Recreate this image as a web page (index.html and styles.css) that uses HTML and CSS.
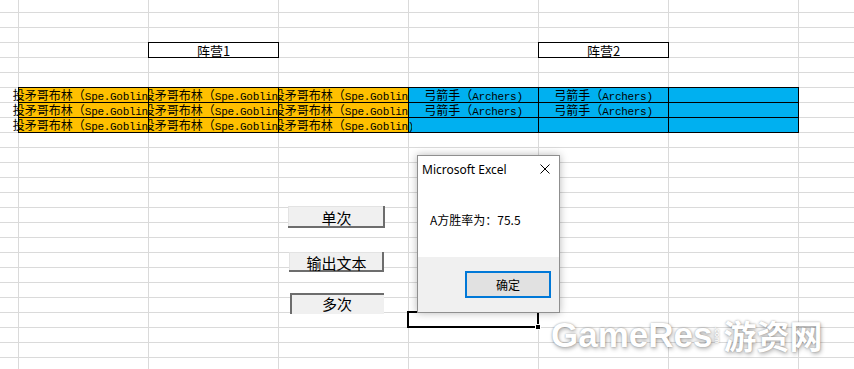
FILE: index.html
```html
<!DOCTYPE html>
<html lang="zh-CN">
<head>
<meta charset="utf-8">
<title>Excel</title>
<link rel="stylesheet" href="styles.css">
</head>
<body>
<div class="sheet">
  <div class="camp camp-1">阵营1</div>
  <div class="camp camp-2">阵营2</div>
  <div class="units">
    <div class="cell gob first"><span>投矛哥布林（<span class="en">Spe.Goblin)</span></span></div>
    <div class="cell gob"><span>投矛哥布林（<span class="en">Spe.Goblin)</span></span></div>
    <div class="cell gob"><span>投矛哥布林（<span class="en">Spe.Goblin)</span></span></div>
    <div class="cell arc"><span>弓箭手（<span class="en">Archers)</span></span></div>
    <div class="cell arc"><span>弓箭手（<span class="en">Archers)</span></span></div>
    <div class="cell arc"></div>

    <div class="cell gob first"><span>投矛哥布林（<span class="en">Spe.Goblin)</span></span></div>
    <div class="cell gob"><span>投矛哥布林（<span class="en">Spe.Goblin)</span></span></div>
    <div class="cell gob"><span>投矛哥布林（<span class="en">Spe.Goblin)</span></span></div>
    <div class="cell arc"><span>弓箭手（<span class="en">Archers)</span></span></div>
    <div class="cell arc"><span>弓箭手（<span class="en">Archers)</span></span></div>
    <div class="cell arc"></div>

    <div class="cell gob first"><span>投矛哥布林（<span class="en">Spe.Goblin)</span></span></div>
    <div class="cell gob"><span>投矛哥布林（<span class="en">Spe.Goblin)</span></span></div>
    <div class="cell gob last"><span>投矛哥布林（<span class="en">Spe.Goblin)</span></span></div>
    <div class="cell arc"></div>
    <div class="cell arc"></div>
    <div class="cell arc"></div>
  </div>
  <div class="active-cell"><span class="fill-handle"></span></div>
</div>

<button class="btn btn-raised btn-single">单次</button>
<button class="btn btn-raised btn-text">输出文本</button>
<button class="btn btn-sunken btn-multi">多次</button>

<div class="dialog">
  <div class="dlg-title">
    <span class="dlg-caption">Microsoft Excel</span>
    <svg class="dlg-close" width="10" height="10" viewBox="0 0 10 10"><path d="M0.5 0.5 L9.5 9.5 M9.5 0.5 L0.5 9.5" stroke="#000" stroke-width="1" fill="none"/></svg>
  </div>
  <div class="dlg-body">A方胜率为：75.5</div>
  <div class="dlg-footer"><button class="dlg-ok">确定</button></div>
</div>

<div class="watermark"><span class="wm-en">GameRes</span><span class="wm-com">.com</span><span class="wm-cn">游资网</span></div>
</body>
</html>
```

FILE: styles.css
```css
* { box-sizing: border-box; }
html, body { margin: 0; padding: 0; }
body {
  width: 854px;
  height: 369px;
  overflow: hidden;
  position: relative;
  background: #fff;
  font-family: "Noto Sans CJK SC", sans-serif;
  color: #000;
}
.sheet {
  margin-top: -3px;
  height: 390px;
  display: grid;
  grid-template-columns: 18px repeat(6, 130px) 1fr;
  grid-template-rows: repeat(26, 15px);
  background-image:
    linear-gradient(to right, #dadada 1px, transparent 1px),
    linear-gradient(to bottom, #dadada 1px, transparent 1px);
  background-size: 130px 15px;
  background-position: 18px 0;
}
.camp {
  grid-row: 4;
  margin: 0 -1px -1px 0;
  border: 1px solid #000;
  background: #fff;
  display: flex;
  justify-content: center;
  align-items: center;
  font-size: 13px;
  line-height: 14px;
  padding-top: 2px;
}
.camp-1 { grid-column: 3; }
.camp-2 { grid-column: 6; }

.units {
  grid-column: 2 / 8;
  grid-row: 7 / 10;
  margin: 0 -1px -1px 0;
  display: grid;
  grid-template-columns: repeat(6, 129px);
  grid-template-rows: repeat(3, 14px);
  gap: 1px;
  padding: 1px;
  background: #000;
}
.cell {
  min-width: 0;
  display: flex;
  justify-content: center;
  align-items: center;
  overflow: hidden;
  white-space: nowrap;
  font-size: 12px;
  line-height: 14px;
  padding-top: 1px;
}
.cell > span { line-height: 14px; }
.cell.first { overflow: visible; clip-path: inset(0 0 0 -10px); }
.cell.last { overflow: visible; clip-path: inset(0 -4px 0 0); position: relative; z-index: 1; }
.gob { background: #ffc000; }
.arc { background: #00b0f0; }
.en {
  font-family: "Liberation Mono", monospace;
  font-size: 11px;
  letter-spacing: -0.3px;
  line-height: 14px;
}

.active-cell {
  grid-column: 5;
  grid-row: 22;
  margin: -1px;
  border: 2px solid #000;
  position: relative;
}
.fill-handle {
  position: absolute;
  right: -4px;
  bottom: -4px;
  width: 6px;
  height: 6px;
  background: #000;
  border: 1px solid #fff;
}

.btn {
  position: absolute;
  margin: 0;
  padding: 0;
  border: none;
  background: #f0f0f0;
  font-family: "Noto Sans CJK SC", sans-serif;
  font-size: 15px;
  line-height: 1;
  color: #000;
  text-align: center;
}
.btn-raised { box-shadow: inset -2px -2px 0 #6d6d6d, inset 1px 1px 0 #e3e3e3; }
.btn-sunken { box-shadow: inset 2px 2px 0 #6d6d6d; }
.btn-single { left: 288px; top: 206px; width: 97px; height: 22px; }
.btn-text { left: 289px; top: 252px; width: 95px; height: 20px; }
.btn-multi { left: 290px; top: 293px; width: 94px; height: 21px; }

.dialog {
  position: absolute;
  left: 417px;
  top: 155px;
  width: 143px;
  height: 158px;
  background: #fff;
  border: 1px solid #8f8f8f;
  box-shadow: 0 0 8px rgba(0,0,0,0.28);
  display: flex;
  flex-direction: column;
}
.dlg-title {
  height: 26px;
  display: flex;
  align-items: center;
  justify-content: space-between;
  padding: 0 9px 0 4px;
}
.dlg-caption {
  font-family: "Noto Sans", sans-serif;
  font-size: 12px;
}
.dlg-body {
  flex: 1;
  display: flex;
  align-items: center;
  padding-left: 12px;
  font-size: 12px;
}
.dlg-footer {
  height: 55px;
  background: #f0f0f0;
  display: flex;
  align-items: center;
  justify-content: flex-end;
  padding-right: 8px;
}
.dlg-ok {
  width: 86px;
  height: 27px;
  margin: 0;
  border: 2px solid #0078d7;
  background: #e1e1e1;
  font-family: "Noto Sans CJK SC", sans-serif;
  font-size: 12px;
  color: #000;
}

.watermark {
  position: absolute;
  left: 551px;
  top: 315px;
  display: flex;
  align-items: center;
  color: #fff;
  font-weight: bold;
  text-shadow: 0 0 2px rgba(0,0,0,0.35), 1px 2px 4px rgba(0,0,0,0.3);
}
.wm-en { font-family: "Liberation Sans", sans-serif; font-size: 35px; }
.wm-com {
  font-family: "Liberation Sans", sans-serif;
  font-size: 7px;
  writing-mode: vertical-rl;
  margin: 0 2px;
}
.wm-cn { font-family: "Noto Sans CJK SC", sans-serif; font-size: 33px; line-height: 1; }
```
